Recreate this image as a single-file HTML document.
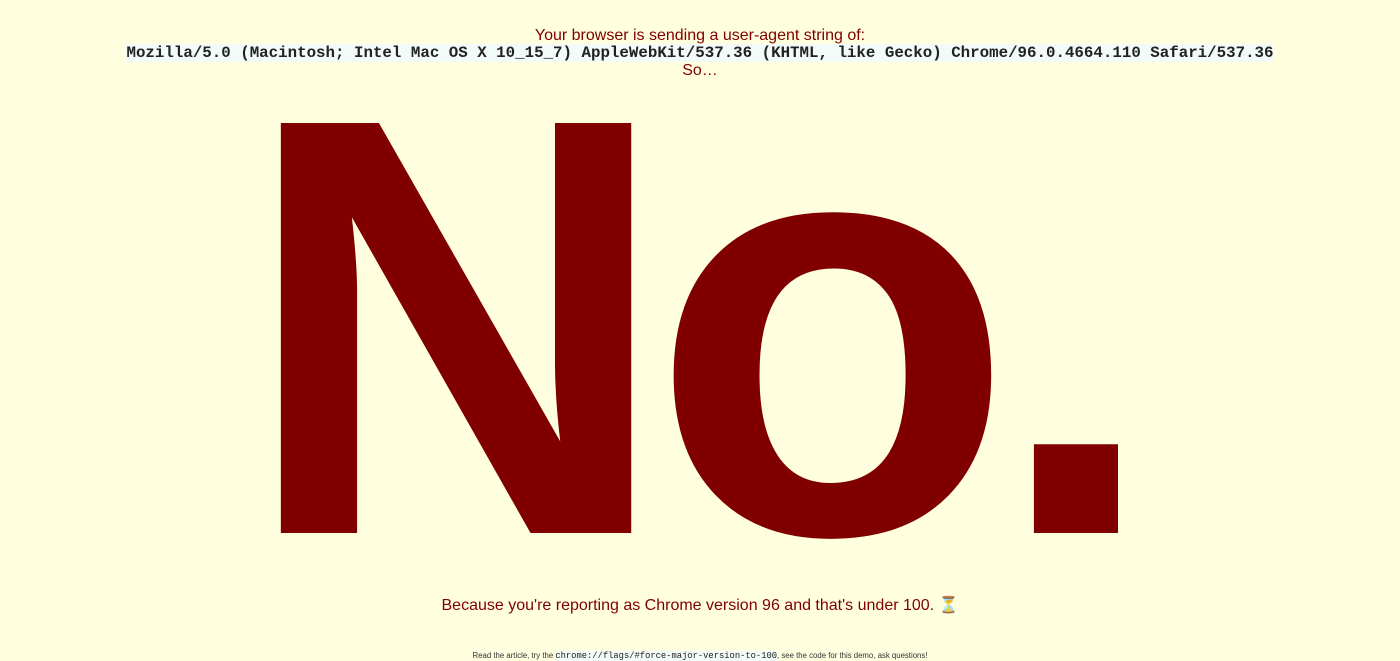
<!DOCTYPE html>
<html><head><style>
body{margin:0;width:1400px;height:660px;background:#ffffe0;color:#800000;font-family:"Liberation Sans",Arial,sans-serif;overflow:hidden;position:relative}
.c{position:absolute;left:0;width:1400px;text-align:center;white-space:nowrap}
code{font-family:"Liberation Mono",monospace;font-weight:bold;background:#f2fbf8;color:#222}
</style></head><body>
<div class="c" style="top:0;font-size:596px;font-weight:bold;line-height:1;height:600px"><span style="position:absolute;left:0;right:0;top:29px;letter-spacing:-21px;text-indent:-21px">No.</span></div>
<div class="c" style="top:27px;font-size:16px;line-height:18px">Your browser is sending a user-agent string of:</div>
<div class="c" style="top:44px;font-size:16px;line-height:18px"><code style="font-size:15.8px">Mozilla/5.0 (Macintosh; Intel Mac OS X 10_15_7) AppleWebKit/537.36 (KHTML, like Gecko) Chrome/96.0.4664.110 Safari/537.36</code></div>
<div class="c" style="top:62px;font-size:16px;line-height:18px">So…</div>
<div class="c" style="top:597px;font-size:16px;line-height:18px">Because you're reporting as Chrome version 96 and that's under 100. ⏳</div>
<div class="c" style="top:651px;font-size:7.8px;line-height:9px;color:#333">Read the article, try the <code style="font-weight:normal;font-size:8.8px">chrome://flags/#force-major-version-to-100</code>, see the code for this demo, ask questions!</div>
</body></html>
